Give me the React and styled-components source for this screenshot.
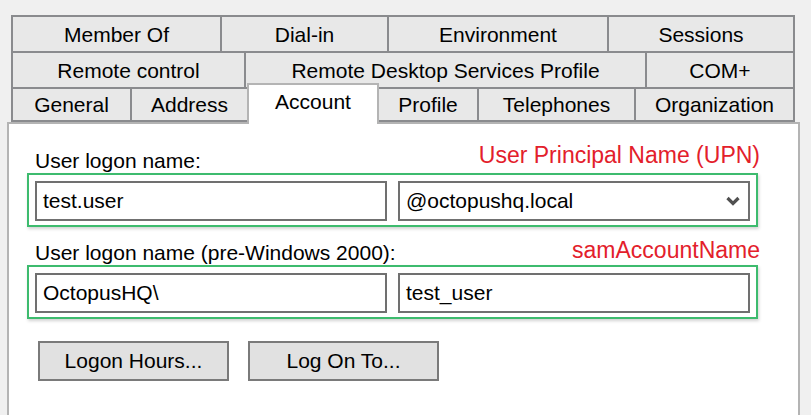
import styled, { createGlobalStyle } from "styled-components"

const GlobalStyle = createGlobalStyle`
    html, body {
        margin: 0;
        padding: 0;
        background-color: #f0f0f0;
        overflow: hidden;
    }
    body {
        font-family: "Liberation Sans", Arial, sans-serif;
        font-size: 21px;
        color: #000000;
    }
`

const tabRows = [
    {
        height: 38,
        tabs: [
            { label: "Member Of", width: 211 },
            { label: "Dial-in", width: 169 },
            { label: "Environment", width: 222 },
            { label: "Sessions", width: 188 },
        ],
    },
    {
        height: 38,
        tabs: [
            { label: "Remote control", width: 235 },
            { label: "Remote Desktop Services Profile", width: 403 },
            { label: "COM+", width: 150 },
        ],
    },
    {
        height: 35,
        tabs: [
            { label: "General", width: 121 },
            { label: "Address", width: 119 },
            { label: "Account", width: 132, active: true },
            { label: "Profile", width: 102 },
            { label: "Telephones", width: 159 },
            { label: "Organization", width: 161 },
        ],
    },
]

function Chevron() {
    return (
        <svg width="14" height="10" viewBox="0 0 14 10">
            <polyline points="1.5,2 7,7.5 12.5,2" fill="none" stroke="#505050" strokeWidth="3.2" />
        </svg>
    )
}

export default function App() {
    return (
        <Dialog>
            <GlobalStyle />
            <TabStrip>
                {tabRows.map((row, i) => (
                    <TabRow key={i} $h={row.height}>
                        {row.tabs.map((tab) => (
                            <Tab key={tab.label} $w={tab.width} $active={tab.active}>
                                {tab.label}
                            </Tab>
                        ))}
                    </TabRow>
                ))}
            </TabStrip>
            <Panel>
                <LabelRow $top={0}>
                    <Label>User logon name:</Label>
                    <Note $lift={5}>User Principal Name (UPN)</Note>
                </LabelRow>
                <GroupBox>
                    <Field>test.user</Field>
                    <Field>
                        @octopushq.local
                        <Arrow>
                            <Chevron />
                        </Arrow>
                    </Field>
                </GroupBox>
                <LabelRow $top={10}>
                    <Label>User logon name (pre-Windows 2000):</Label>
                    <Note $lift={2}>samAccountName</Note>
                </LabelRow>
                <GroupBox>
                    <Field>OctopusHQ\</Field>
                    <Field>test_user</Field>
                </GroupBox>
                <ButtonRow>
                    <Button>Logon Hours...</Button>
                    <Button>Log On To...</Button>
                </ButtonRow>
            </Panel>
        </Dialog>
    )
}

const Dialog = styled.div`
    width: 811px;
    height: 415px;
    padding-top: 15px;
    box-sizing: border-box;
    overflow: hidden;
`

const TabStrip = styled.div`
    display: flex;
    flex-direction: column;
    margin-left: 11px;
    width: 784px;
`

const TabRow = styled.div`
    display: flex;
    align-items: stretch;
    height: ${(props) => props.$h}px;
    & + & {
        margin-top: -2px;
    }
`

const Tab = styled.div`
    box-sizing: border-box;
    width: ${(props) => props.$w}px;
    flex-shrink: 0;
    display: flex;
    align-items: center;
    justify-content: center;
    padding-top: 1px;
    border: 2px solid #8a8b8e;
    background-color: #e8e8e8;
    white-space: nowrap;
    & + & {
        margin-left: -2px;
    }
    ${(props) =>
        props.$active &&
        `
        position: relative;
        z-index: 1;
        height: 41px;
        align-self: flex-start;
        margin-top: -4px;
        margin-bottom: -2px;
        padding-top: 0;
        padding-bottom: 6px;
        background-color: #ffffff;
        border-color: #b4b4b4;
        border-bottom: none;
    `}
`

const Panel = styled.div`
    box-sizing: border-box;
    margin-left: 7px;
    width: 793px;
    height: 300px;
    padding: 18px 0 0 18px;
    background-color: #ffffff;
    border: 2px solid #b4b4b4;
    display: flex;
    flex-direction: column;
`

const LabelRow = styled.div`
    width: 731px;
    display: flex;
    justify-content: space-between;
    align-items: flex-end;
    margin-top: ${(props) => props.$top}px;
`

const Label = styled.div`
    padding-left: 8px;
    line-height: 24px;
    white-space: nowrap;
`

const Note = styled.div`
    font-size: 23px;
    line-height: 26px;
    color: #e3202b;
    margin-right: -2px;
    margin-bottom: ${(props) => props.$lift}px;
    white-space: nowrap;
`

const GroupBox = styled.div`
    box-sizing: border-box;
    width: 731px;
    display: flex;
    gap: 11px;
    padding: 6px 6px 4px 6px;
    border: 2px solid #3dbb6e;
    box-shadow: 1px 2px 3px rgba(0, 0, 0, 0.18);
`

const Field = styled.div`
    box-sizing: border-box;
    flex: 1;
    height: 40px;
    display: flex;
    align-items: center;
    padding: 0 6px;
    border: 2px solid #707070;
    background-color: #ffffff;
    white-space: nowrap;
`

const Arrow = styled.span`
    margin-left: auto;
    margin-right: 2px;
    display: flex;
    align-items: center;
`

const ButtonRow = styled.div`
    display: flex;
    gap: 19px;
    margin-top: 22px;
    padding-left: 11px;
`

const Button = styled.div`
    box-sizing: border-box;
    width: 191px;
    height: 40px;
    display: flex;
    align-items: center;
    justify-content: center;
    background-color: #e1e1e1;
    border: 2px solid #7a7a7a;
    white-space: nowrap;
`
